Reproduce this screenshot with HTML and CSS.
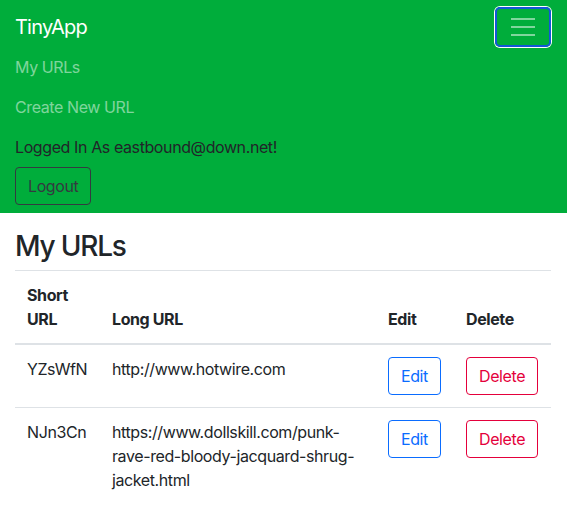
FILE: index.html
```html
<!DOCTYPE html>
<html lang="en">
<head>
<meta charset="utf-8">
<title>TinyApp</title>
<link rel="stylesheet" href="styles.css">
</head>
<body>
<nav class="navbar">
  <div class="navbar-top">
    <a class="brand" href="#">TinyApp</a>
    <button class="toggler" type="button" aria-label="Toggle navigation">
      <svg class="toggler-icon" width="26" height="20" viewBox="0 0 26 20">
        <path d="M1 2h24M1 10h24M1 18h24" stroke="rgba(255,255,255,0.5)" stroke-width="2" fill="none"/>
      </svg>
    </button>
  </div>
  <div class="nav-menu">
    <a class="nav-link" href="#">My URLs</a>
    <a class="nav-link" href="#">Create New URL</a>
    <span class="navbar-text">Logged In As eastbound@down.net!</span>
    <div><button class="btn btn-outline-dark" type="button">Logout</button></div>
  </div>
</nav>
<main class="container">
  <h3 class="page-title">My URLs</h3>
  <table class="table">
    <colgroup>
      <col class="col-short">
      <col class="col-long">
      <col class="col-edit">
      <col class="col-delete">
    </colgroup>
    <thead>
      <tr>
        <th>Short URL</th>
        <th>Long URL</th>
        <th>Edit</th>
        <th>Delete</th>
      </tr>
    </thead>
    <tbody>
      <tr>
        <td>YZsWfN</td>
        <td>http://www.hotwire.com</td>
        <td><button class="btn btn-outline-primary" type="button">Edit</button></td>
        <td><button class="btn btn-outline-danger" type="button">Delete</button></td>
      </tr>
      <tr>
        <td>NJn3Cn</td>
        <td>https://www.dollskill.com/punk-rave-red-bloody-jacquard-shrug-jacket.html</td>
        <td><button class="btn btn-outline-primary" type="button">Edit</button></td>
        <td><button class="btn btn-outline-danger" type="button">Delete</button></td>
      </tr>
    </tbody>
  </table>
</main>
</body>
</html>
```
FILE: styles.css
```css
* { box-sizing: border-box; }
html, body { margin: 0; padding: 0; }
body {
  font-family: Inter, "Liberation Sans", sans-serif;
  font-size: 16px;
  line-height: 1.5;
  letter-spacing: -0.4px;
  color: #212529;
  background: #fff;
}
a { text-decoration: none; }

.navbar {
  background: #00ad3b;
  padding: 7px 16px 8px 15px;
}
.navbar-top {
  display: flex;
  justify-content: space-between;
  align-items: center;
  height: 40px;
}
.brand {
  color: #fff;
  font-size: 20px;
  line-height: 30px;
  padding: 5px 0;
  letter-spacing: -0.8px;
}
.toggler {
  width: 56px;
  height: 40px;
  padding: 0;
  background: transparent;
  border: 2px solid #1257d8;
  border-radius: 5px;
  box-shadow: 0 0 0 1px #fff;
  display: flex;
  align-items: center;
  justify-content: center;
}
.toggler-icon { display: block; }
.nav-menu {
  display: flex;
  flex-direction: column;
  align-items: flex-start;
}
.nav-link {
  color: rgba(255, 255, 255, 0.5);
  padding: 8px 0;
  line-height: 24px;
}
.navbar-text {
  padding: 8px 0;
  line-height: 24px;
  color: #212529;
}

.btn {
  display: inline-block;
  font-family: inherit;
  font-size: 16px;
  line-height: 24px;
  letter-spacing: -0.4px;
  padding: 6px 12px;
  border: 1px solid transparent;
  border-radius: 4px;
  background: transparent;
  cursor: pointer;
}
.btn-outline-dark { color: #343a40; border-color: #343a40; }
.btn-outline-primary { color: #0a6cff; border-color: #0a6cff; }
.btn-outline-danger { color: #e4003b; border-color: #e4003b; }

.container { padding: 0 16px 0 15px; }
.page-title {
  font-size: 28px;
  font-weight: 500;
  line-height: 34px;
  letter-spacing: -1.2px;
  margin: 16px 0 7px;
}
.table {
  width: 100%;
  border-collapse: collapse;
  table-layout: fixed;
}
.col-short { width: 85px; }
.col-long { width: 276px; }
.col-edit { width: 78px; }
.col-delete { width: 97px; }
.table th, .table td {
  padding: 12px;
  text-align: left;
  border-top: 1px solid #dee2e6;
}
.table th {
  font-weight: 700;
  vertical-align: bottom;
}
.table thead th { border-bottom: 2px solid #dee2e6; }
.table td { vertical-align: top; }
```
